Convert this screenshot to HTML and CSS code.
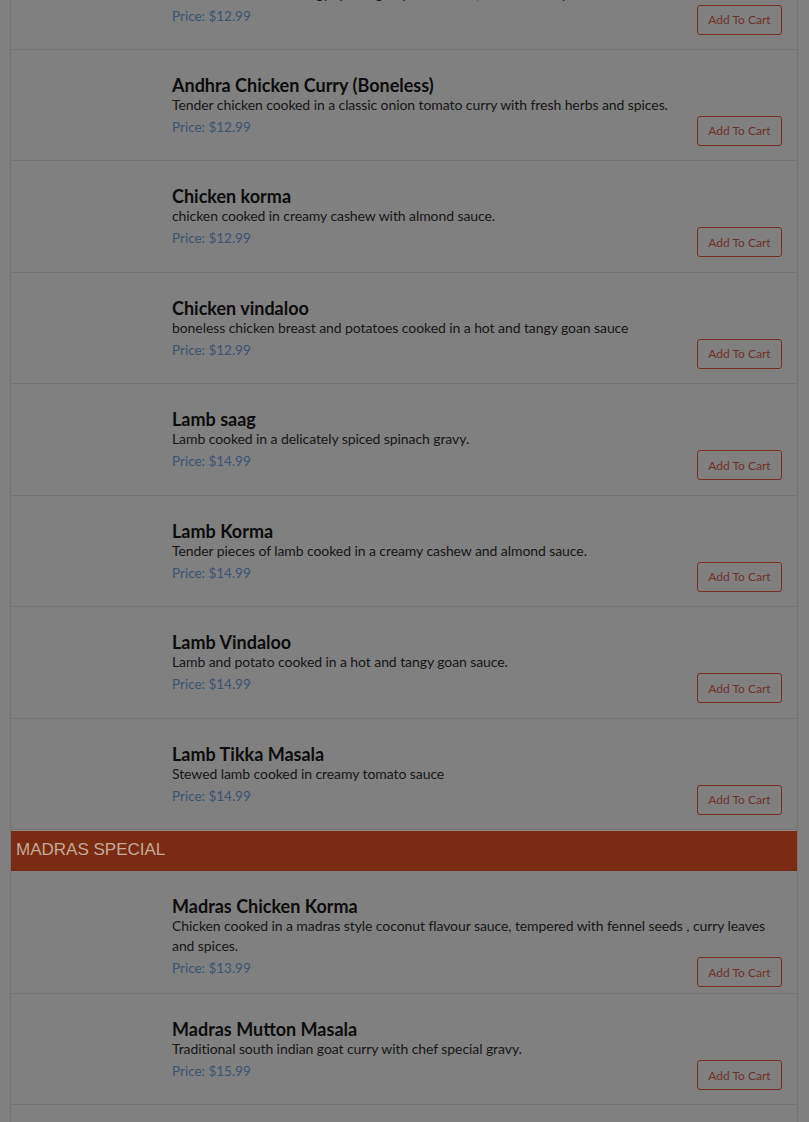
FILE: index.html
```html
<!DOCTYPE html>
<html lang="en">
<head>
<meta charset="utf-8">
<title>Menu</title>
<link rel="stylesheet" href="styles.css">
</head>
<body>
<div class="menu">
  <div class="list scrolled">
    <div class="item">
      <div class="thumb"></div>
      <div class="info">
        <h3 class="name">Chicken Chettinad</h3>
        <p class="desc">Chicken cooked in a tangy spiced gravy with onion, tomato and spices.</p>
        <p class="price">Price: $12.99</p>
      </div>
      <button class="cart">Add To Cart</button>
    </div>
    <div class="item">
      <div class="thumb"></div>
      <div class="info">
        <h3 class="name">Andhra Chicken Curry (Boneless)</h3>
        <p class="desc">Tender chicken cooked in a classic onion tomato curry with fresh herbs and spices.</p>
        <p class="price">Price: $12.99</p>
      </div>
      <button class="cart">Add To Cart</button>
    </div>
    <div class="item">
      <div class="thumb"></div>
      <div class="info">
        <h3 class="name">Chicken korma</h3>
        <p class="desc">chicken cooked in creamy cashew with almond sauce.</p>
        <p class="price">Price: $12.99</p>
      </div>
      <button class="cart">Add To Cart</button>
    </div>
    <div class="item">
      <div class="thumb"></div>
      <div class="info">
        <h3 class="name">Chicken vindaloo</h3>
        <p class="desc">boneless chicken breast and potatoes cooked in a hot and tangy goan sauce</p>
        <p class="price">Price: $12.99</p>
      </div>
      <button class="cart">Add To Cart</button>
    </div>
    <div class="item">
      <div class="thumb"></div>
      <div class="info">
        <h3 class="name">Lamb saag</h3>
        <p class="desc">Lamb cooked in a delicately spiced spinach gravy.</p>
        <p class="price">Price: $14.99</p>
      </div>
      <button class="cart">Add To Cart</button>
    </div>
    <div class="item">
      <div class="thumb"></div>
      <div class="info">
        <h3 class="name">Lamb Korma</h3>
        <p class="desc">Tender pieces of lamb cooked in a creamy cashew and almond sauce.</p>
        <p class="price">Price: $14.99</p>
      </div>
      <button class="cart">Add To Cart</button>
    </div>
    <div class="item">
      <div class="thumb"></div>
      <div class="info">
        <h3 class="name">Lamb Vindaloo</h3>
        <p class="desc">Lamb and potato cooked in a hot and tangy goan sauce.</p>
        <p class="price">Price: $14.99</p>
      </div>
      <button class="cart">Add To Cart</button>
    </div>
    <div class="item">
      <div class="thumb"></div>
      <div class="info">
        <h3 class="name">Lamb Tikka Masala</h3>
        <p class="desc">Stewed lamb cooked in creamy tomato sauce</p>
        <p class="price">Price: $14.99</p>
      </div>
      <button class="cart">Add To Cart</button>
    </div>
  </div>
  <h2 class="section">MADRAS SPECIAL</h2>
  <div class="list">
    <div class="item">
      <div class="thumb"></div>
      <div class="info">
        <h3 class="name">Madras Chicken Korma</h3>
        <p class="desc">Chicken cooked in a madras style coconut flavour sauce, tempered with fennel seeds , curry leaves and spices.</p>
        <p class="price">Price: $13.99</p>
      </div>
      <button class="cart">Add To Cart</button>
    </div>
    <div class="item">
      <div class="thumb"></div>
      <div class="info">
        <h3 class="name">Madras Mutton Masala</h3>
        <p class="desc">Traditional south indian goat curry with chef special gravy.</p>
        <p class="price">Price: $15.99</p>
      </div>
      <button class="cart">Add To Cart</button>
    </div>
    <div class="item">
      <div class="thumb"></div>
      <div class="info">
        <h3 class="name">Madras Fish Curry</h3>
        <p class="desc">Fish cooked in a tangy tamarind gravy.</p>
        <p class="price">Price: $15.99</p>
      </div>
      <button class="cart">Add To Cart</button>
    </div>
  </div>
</div>
</body>
</html>
```

FILE: styles.css
```css
html, body {
  margin: 0;
  padding: 0;
  background: #808080;
  overflow: hidden;
  height: 1122px;
}

body {
  font-family: Lato, "Noto Sans", sans-serif;
  color: #111;
}

.menu {
  margin: 0 11px 0 10px;
  border-left: 1px solid #737373;
  border-right: 1px solid #737373;
  min-height: 1200px;
}

.list.scrolled {
  margin-top: -61.5px;
}

.item {
  box-sizing: border-box;
  min-height: 111.45px;
  display: grid;
  grid-template-columns: 161px 1fr 85px;
  align-content: start;
  padding: 25px 15px 14px 0;
  border-bottom: 1px solid #737373;
}

.thumb {
  grid-column: 1;
  grid-row: 1;
}

.info {
  grid-column: 2 / 4;
  grid-row: 1;
}

.name {
  margin: 0;
  font-size: 18px;
  line-height: 20px;
  font-weight: 700;
  color: #0c0c0c;
}

.desc {
  margin: 0;
  font-size: 14px;
  line-height: 20px;
  letter-spacing: -0.08px;
  color: #161616;
}

.price {
  margin: 0;
  padding-top: 2px;
  font-size: 13.5px;
  line-height: 21px;
  color: #3a5372;
}

.cart {
  grid-column: 3;
  grid-row: 1;
  align-self: end;
  width: 85px;
  height: 30px;
  margin-bottom: -8px;
  background: transparent;
  border: 1px solid #7a2e22;
  border-radius: 3px;
  color: #6e3128;
  font-family: Lato, "Noto Sans", sans-serif;
  font-size: 12px;
  padding: 0;
}

.section {
  margin: 0;
  height: 40px;
  line-height: 37px;
  padding: 0 0 0 5px;
  background: #7b2b12;
  color: #c4aa9c;
  font-family: "Liberation Sans", Arial, sans-serif;
  font-weight: 400;
  font-size: 17px;
  border-top: 1px solid #8a8a8a;
}
```
